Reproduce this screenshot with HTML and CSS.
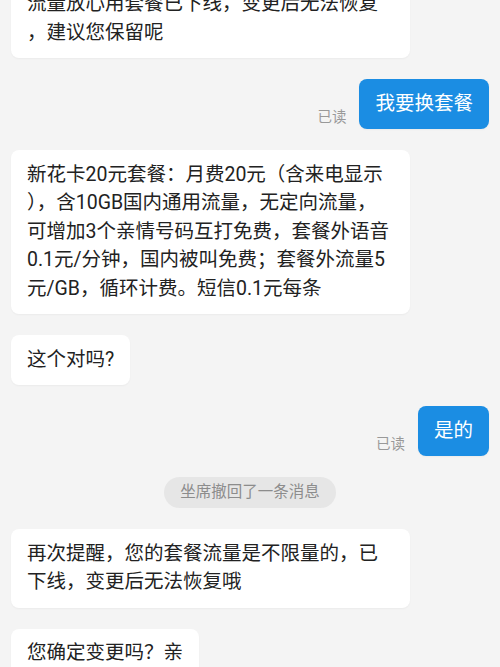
FILE: index.html
```html
<!DOCTYPE html>
<html lang="zh-CN">
<head>
<meta charset="utf-8">
<title>聊天</title>
<link rel="stylesheet" href="styles.css">
</head>
<body>
<div class="chat">
  <div class="row left">
    <div class="bubble full">流量放心用套餐已下线，变更后无法恢复<br>，建议您保留呢</div>
  </div>
  <div class="row right">
    <span class="read">已读</span>
    <div class="bubble mine">我要换套餐</div>
  </div>
  <div class="row left">
    <div class="bubble full">新花卡20元套餐：月费20元（含来电显示<br>），含10GB国内通用流量，无定向流量，<br>可增加3个亲情号码互打免费，套餐外语音<br>0.1元/分钟，国内被叫免费；套餐外流量5<br>元/GB，循环计费。短信0.1元每条</div>
  </div>
  <div class="row left">
    <div class="bubble">这个对吗?</div>
  </div>
  <div class="row right">
    <span class="read">已读</span>
    <div class="bubble mine">是的</div>
  </div>
  <div class="row center">
    <span class="notice">坐席撤回了一条消息</span>
  </div>
  <div class="row left">
    <div class="bubble full">再次提醒，您的套餐流量是不限量的，已<br>下线，变更后无法恢复哦</div>
  </div>
  <div class="row left">
    <div class="bubble">您确定变更吗？亲</div>
  </div>
</div>
</body>
</html>
```
FILE: styles.css
```css
html, body {
  margin: 0;
  padding: 0;
  background: #f4f4f4;
  height: 100%;
  overflow: hidden;
}
body {
  font-family: Roboto, "Noto Sans CJK SC", sans-serif;
  color: #222;
}
.chat {
  display: flex;
  flex-direction: column;
  gap: 21px;
  padding: 0 11px;
  margin-top: -20.5px;
}
.row {
  display: flex;
  align-items: flex-end;
}
.row.left { justify-content: flex-start; }
.row.right { justify-content: flex-end; gap: 13px; }
.row.center { justify-content: center; }
.bubble {
  background: #fff;
  border-radius: 8px;
  padding: 10.75px 16px;
  font-size: 19.5px;
  line-height: 28.5px;
  white-space: nowrap;
  box-shadow: 0 1px 2px rgba(0, 0, 0, 0.04);
}
.bubble.full {
  width: 399px;
  box-sizing: border-box;
}
.bubble.mine {
  background: #1b8de3;
  color: #fff;
}
.read {
  font-size: 14.5px;
  line-height: 20px;
  color: #999;
  margin-bottom: 1px;
}
.notice {
  background: #e6e6e6;
  color: #8c8c8c;
  font-size: 15.5px;
  line-height: 31px;
  padding: 0 16px;
  border-radius: 15.5px;
}
```
